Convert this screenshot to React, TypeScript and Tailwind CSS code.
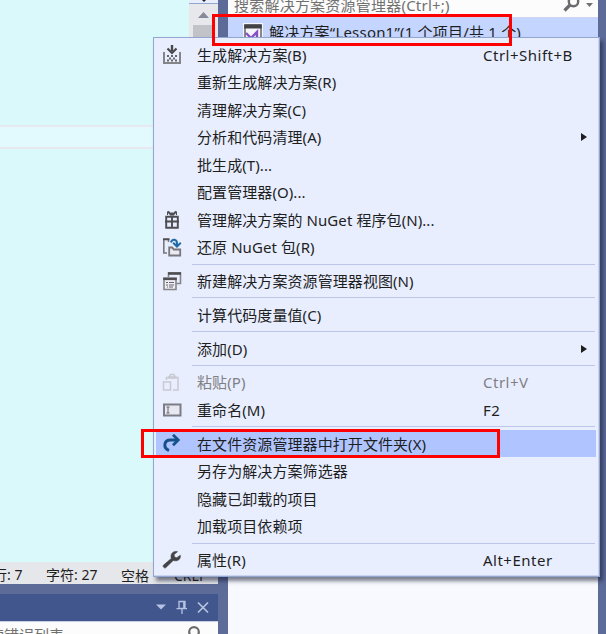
import type { ReactNode } from 'react';

type Item = {
  label: string;
  shortcut?: string;
  icon?: ReactNode;
  submenu?: boolean;
  disabled?: boolean;
  active?: boolean;
};

const BuildIcon = () => (
  <svg width="20" height="20" viewBox="0 0 20 20" fill="none">
    <path d="M2 7v11h16V7" stroke="#858589" strokeWidth="2" />
    <path d="M10 0v6" stroke="#48484c" strokeWidth="2.4" />
    <path d="M5.5 3.5L10 8l4.500-4.500" stroke="#48484c" strokeWidth="2.2" />
    <path d="M5 10h2v2H5zM9 10h2v2H9zM13 10h2v2h-2zM7 12.500h2v2H7zM11 12.500h2v2h-2zM5 14.500h2v2H5zM9 14.500h2v2H9zM13 14.500h2v2h-2z" fill="#66666d" />
  </svg>
);

const PackageIcon = () => (
  <svg width="20" height="20" viewBox="0 0 20 20" fill="none" stroke="#4c4c51">
    <path d="M6 1.500l3.300 3.500M14 1.500L10.700 5M10 2.500v3" strokeWidth="2" />
    <path d="M5.500 1.500v3.500M14.500 1.500v3.500" strokeWidth="1" />
    <path d="M4.200 6.800h11.600v11H4.200zM10 6v12M3 11.500h14" strokeWidth="1.900" />
  </svg>
);

const RestoreIcon = () => (
  <svg width="20" height="20" viewBox="0 0 20 20" fill="none">
    <path d="M5 16H1.800V2.500H6.500V5" stroke="#77777d" strokeWidth="1.600" />
    <path d="M1 2.200h6.500" stroke="#4d4d52" strokeWidth="1.800" />
    <path d="M7.200 10.500h3l1.500 2h6.500v6h-11z" fill="#eceaf0" stroke="#77777d" strokeWidth="1.800" />
    <path d="M9 5.500C10 1.500 15 1.800 15 6.500v2.500M11.200 5.800l3.800 3.700l3.800-3.700" stroke="#1f6aa8" strokeWidth="2" />
  </svg>
);

const NewViewIcon = () => (
  <svg width="20" height="20" viewBox="0 0 20 20" fill="none">
    <path d="M6.500 6V2h12v10.500h-4" stroke="#85858a" strokeWidth="1.600" />
    <path d="M6 2.500h13" stroke="#4d4d52" strokeWidth="2.600" />
    <path d="M2 7.500h12v11H2z" fill="#eeedf4" stroke="#85858a" strokeWidth="1.600" />
    <path d="M1.200 7.800h13.600" stroke="#4d4d52" strokeWidth="2.600" />
    <path d="M4 11.500h2M7 11.500h5M4 14h2M7 14h5M5 16h1M7 16h4" stroke="#68686d" strokeWidth="1.200" />
  </svg>
);

const PasteIcon = () => (
  <svg width="20" height="20" viewBox="0 0 20 20" fill="none" stroke="#c8c9d2" strokeWidth="1.500">
    <path d="M4.500 8V5.500h11.500V18h-5M7.500 5l1-2.500h3.500l1 2.500" />
    <path d="M1.500 10h7v8h-7z" />
    <path d="M6 5.500h8.500" strokeWidth="2.400" />
  </svg>
);

const RenameIcon = () => (
  <svg width="20" height="20" viewBox="0 0 20 20" fill="none">
    <path d="M2 4.500h16.500v11H2z" fill="#e8e8f3" stroke="#7b7c84" strokeWidth="2" />
    <path d="M4.500 7h3M4.500 13h3M6 7v6" stroke="#66676e" />
  </svg>
);

const OpenFolderIcon = () => (
  <svg width="20" height="20" viewBox="0 0 20 20" fill="none" stroke="#17518c" strokeWidth="3">
    <path d="M7 16.500C1 14 1.500 6 8.500 6H16" />
    <path d="M11 .800l5.200 5.200l-5.200 5.200" strokeWidth="2.800" />
  </svg>
);

const WrenchIcon = () => (
  <svg width="20" height="20" viewBox="0 0 20 20">
    <path d="M18.300 5.200l-3.500 2.500l-2.400-.8l-.3-2.500l3.500-2.700C12.700.6 8.900 2.500 9 6.500c0 .8.1 1.300.3 1.900L1.500 15.100c-1.300 1.300.9 3.800 2.400 2.500l7.300-7.100c4.700 1.300 7.800-1.500 7.100-5.300z" fill="#424246" stroke="#424246" strokeWidth="0.6" />
  </svg>
);

// null marks a separator
const items: (Item | null)[] = [
  { label: '生成解决方案(B)', shortcut: 'Ctrl+Shift+B', icon: <BuildIcon /> },
  { label: '重新生成解决方案(R)' },
  { label: '清理解决方案(C)' },
  { label: '分析和代码清理(A)', submenu: true },
  { label: '批生成(T)...' },
  { label: '配置管理器(O)...' },
  { label: '管理解决方案的 NuGet 程序包(N)...', icon: <PackageIcon /> },
  { label: '还原 NuGet 包(R)', icon: <RestoreIcon /> },
  null,
  { label: '新建解决方案资源管理器视图(N)', icon: <NewViewIcon /> },
  null,
  { label: '计算代码度量值(C)' },
  null,
  { label: '添加(D)', submenu: true },
  null,
  { label: '粘贴(P)', shortcut: 'Ctrl+V', icon: <PasteIcon />, disabled: true },
  { label: '重命名(M)', shortcut: 'F2', icon: <RenameIcon /> },
  null,
  { label: '在文件资源管理器中打开文件夹(X)', icon: <OpenFolderIcon />, active: true },
  { label: '另存为解决方案筛选器' },
  { label: '隐藏已卸载的项目' },
  { label: '加载项目依赖项' },
  null,
  { label: '属性(R)', shortcut: 'Alt+Enter', icon: <WrenchIcon /> },
];

function MenuRow({ item }: { item: Item }) {
  return (
    <div
      className={`flex h-[27.5px] items-center ml-[2px] mr-[3px] pl-[6px] ${item.active ? 'bg-[#b0c5ff]' : ''} ${
        item.disabled ? 'text-[#808084]' : 'text-[#1e1e1e]'
      }`}
    >
      <div className="w-[35px] shrink-0">{item.icon}</div>
      <span className="w-[286px] shrink-0 tracking-[0.08px]">{item.label}</span>
      <span className="w-[98px] shrink-0 tracking-[0.5px]">{item.shortcut}</span>
      {item.submenu && (
        <svg width="6" height="8" viewBox="0 0 6 8">
          <path d="M0 0l6 4l-6 4z" fill="#1e1e1e" />
        </svg>
      )}
    </div>
  );
}

function ContextMenu() {
  return (
    <div className="absolute left-[153px] top-[37px] h-[540px] w-[447px] border border-[#93a6cf] bg-[#e8eefe] pt-[3px] shadow-[3px_4px_4px_rgba(20,25,50,0.55),inset_-1px_-1px_0_#c9d4ef]">
      {items.map((item, i) =>
        item ? (
          <MenuRow key={i} item={item} />
        ) : (
          <div key={i} className="flex h-[6.3px] items-center pl-[38px] pr-[4px]">
            <div className="h-px w-full bg-[#bcc6e8]" />
          </div>
        )
      )}
    </div>
  );
}

function EditorPane() {
  return (
    <div className="flex w-[218px] shrink-0 flex-col">
      <div className="flex h-[562px]">
        <div className="w-[189px] bg-[#daf9fb] pt-[125px]">
          <div className="h-[24px] border-y-2 border-[#e8e8f1] bg-[#e2fafd]" />
        </div>
        <div className="flex w-[29px] flex-col items-center bg-[#e8e8ec]">
          <div className="flex h-[4px] w-full justify-center border-b border-[#93a6cf] bg-[#e8eefe]">
            <svg width="8" height="3" viewBox="0 0 8 3">
              <path d="M2 0h4l-2 2z" fill="#1e1e1e" />
            </svg>
          </div>
          <svg className="mt-[8px]" width="11" height="6" viewBox="0 0 11 6">
            <path d="M0 6l5.500-6l5.500 6z" fill="#868999" />
          </svg>
          <div className="mt-[7px] h-[400px] w-[21px] bg-[#c2c3c9]" />
        </div>
      </div>
      <div className="flex h-[22px] items-center overflow-hidden whitespace-pre bg-[#e6e7eb] text-[14px] leading-[22px] text-[#1e1e1e]">
        <span className="-ml-[7px] w-[53px] shrink-0 pt-[3px]">行: 7</span>
        <span className="w-[75px] shrink-0 pt-[3px]">字符: 27</span>
        <span className="w-[53px] shrink-0 pt-[5px]">空格</span>
        <span className="shrink-0 pt-[5px]">CRLF</span>
      </div>
      <div className="mt-[10px] flex h-[27px] items-center justify-end bg-[#40568d] pr-[9px]">
        <svg width="54" height="16" viewBox="0 0 54 16" fill="none" stroke="#b7c3e2" strokeWidth="1.300">
          <path d="M1 4.500h10l-5 5z" fill="#b7c3e2" stroke="none" />
          <path d="M24 1.500h6v7h-6zM28.800 1.500v7M21.500 8.700h10.500M27 9v5" />
          <path d="M43 2.500l10 10M53 2.500l-10 10" strokeWidth="1.700" />
        </svg>
      </div>
      <div className="flex h-[13px] justify-between overflow-hidden border-t border-[#c5cfe8] bg-[#fcfcfc] pr-[17px] text-[15px] text-[#717171]">
        <span className="-ml-[11px] pt-[4px] leading-[18px]">索错误列表</span>
        <svg width="14" height="14" viewBox="0 0 14 14" fill="none" stroke="#6b6b6f">
          <circle cx="7" cy="10" r="4.800" strokeWidth="2.200" />
        </svg>
      </div>
    </div>
  );
}

function SolutionExplorer() {
  return (
    <div className="ml-[10px] flex w-[370px] shrink-0 flex-col bg-[#f7f9fe]">
      <div className="flex h-[18px] items-start justify-between overflow-hidden border-b border-[#ccd5f0] bg-[#fcfcfc] pl-[6px] pr-[4px] text-[15px] text-[#717171]">
        <span className="-mt-[5px] leading-[20px] tracking-[0.22px]">搜索解决方案资源管理器(Ctrl+;)</span>
        <svg width="32" height="14" viewBox="0 0 32 14" fill="none">
          <circle cx="11.500" cy="1.500" r="4.700" stroke="#6b6b6f" strokeWidth="2.400" />
          <path d="M8 5l-5.500 5.500" stroke="#6b6b6f" strokeWidth="3.200" />
          <path d="M24 3h7l-3.500 4z" fill="#717171" />
        </svg>
      </div>
      <div className="flex h-[28px] bg-[#c4d5ff] pl-[15px] pt-[5px] text-[15px] text-[#1e1e1e]">
        <svg width="20" height="20" viewBox="0 0 20 20" fill="none">
          <path d="M0 0h20v20H0z" fill="#f6f6f9" />
          <path d="M2 2h16v16H2z" stroke="#5a5a60" strokeWidth="1.400" />
          <path d="M1.200 1.500h17.600v4H1.200z" fill="#424246" />
          <path d="M3 10l5 5M8 15l6-6v8" stroke="#8750c7" strokeWidth="2.400" />
        </svg>
        <span className="-mt-px ml-[6px] whitespace-pre leading-[20px] tracking-[0.2px]">解决方案“Lesson1”(1 个项目/共 1 个)</span>
      </div>
    </div>
  );
}

export default function App() {
  return (
    <div className="relative flex h-[634px] w-[606px] overflow-hidden whitespace-nowrap bg-[#5d6b99] font-['Noto_Sans','Noto_Sans_CJK_SC',sans-serif] text-[15px] leading-[20px]">
      <EditorPane />
      <SolutionExplorer />
      <ContextMenu />
      <div className="absolute left-[212px] top-[14px] h-[32px] w-[300px] border-3 border-[#ff0000]" />
      <div className="absolute left-[141px] top-[429px] h-[29px] w-[359px] border-3 border-[#ff0000]" />
    </div>
  );
}
